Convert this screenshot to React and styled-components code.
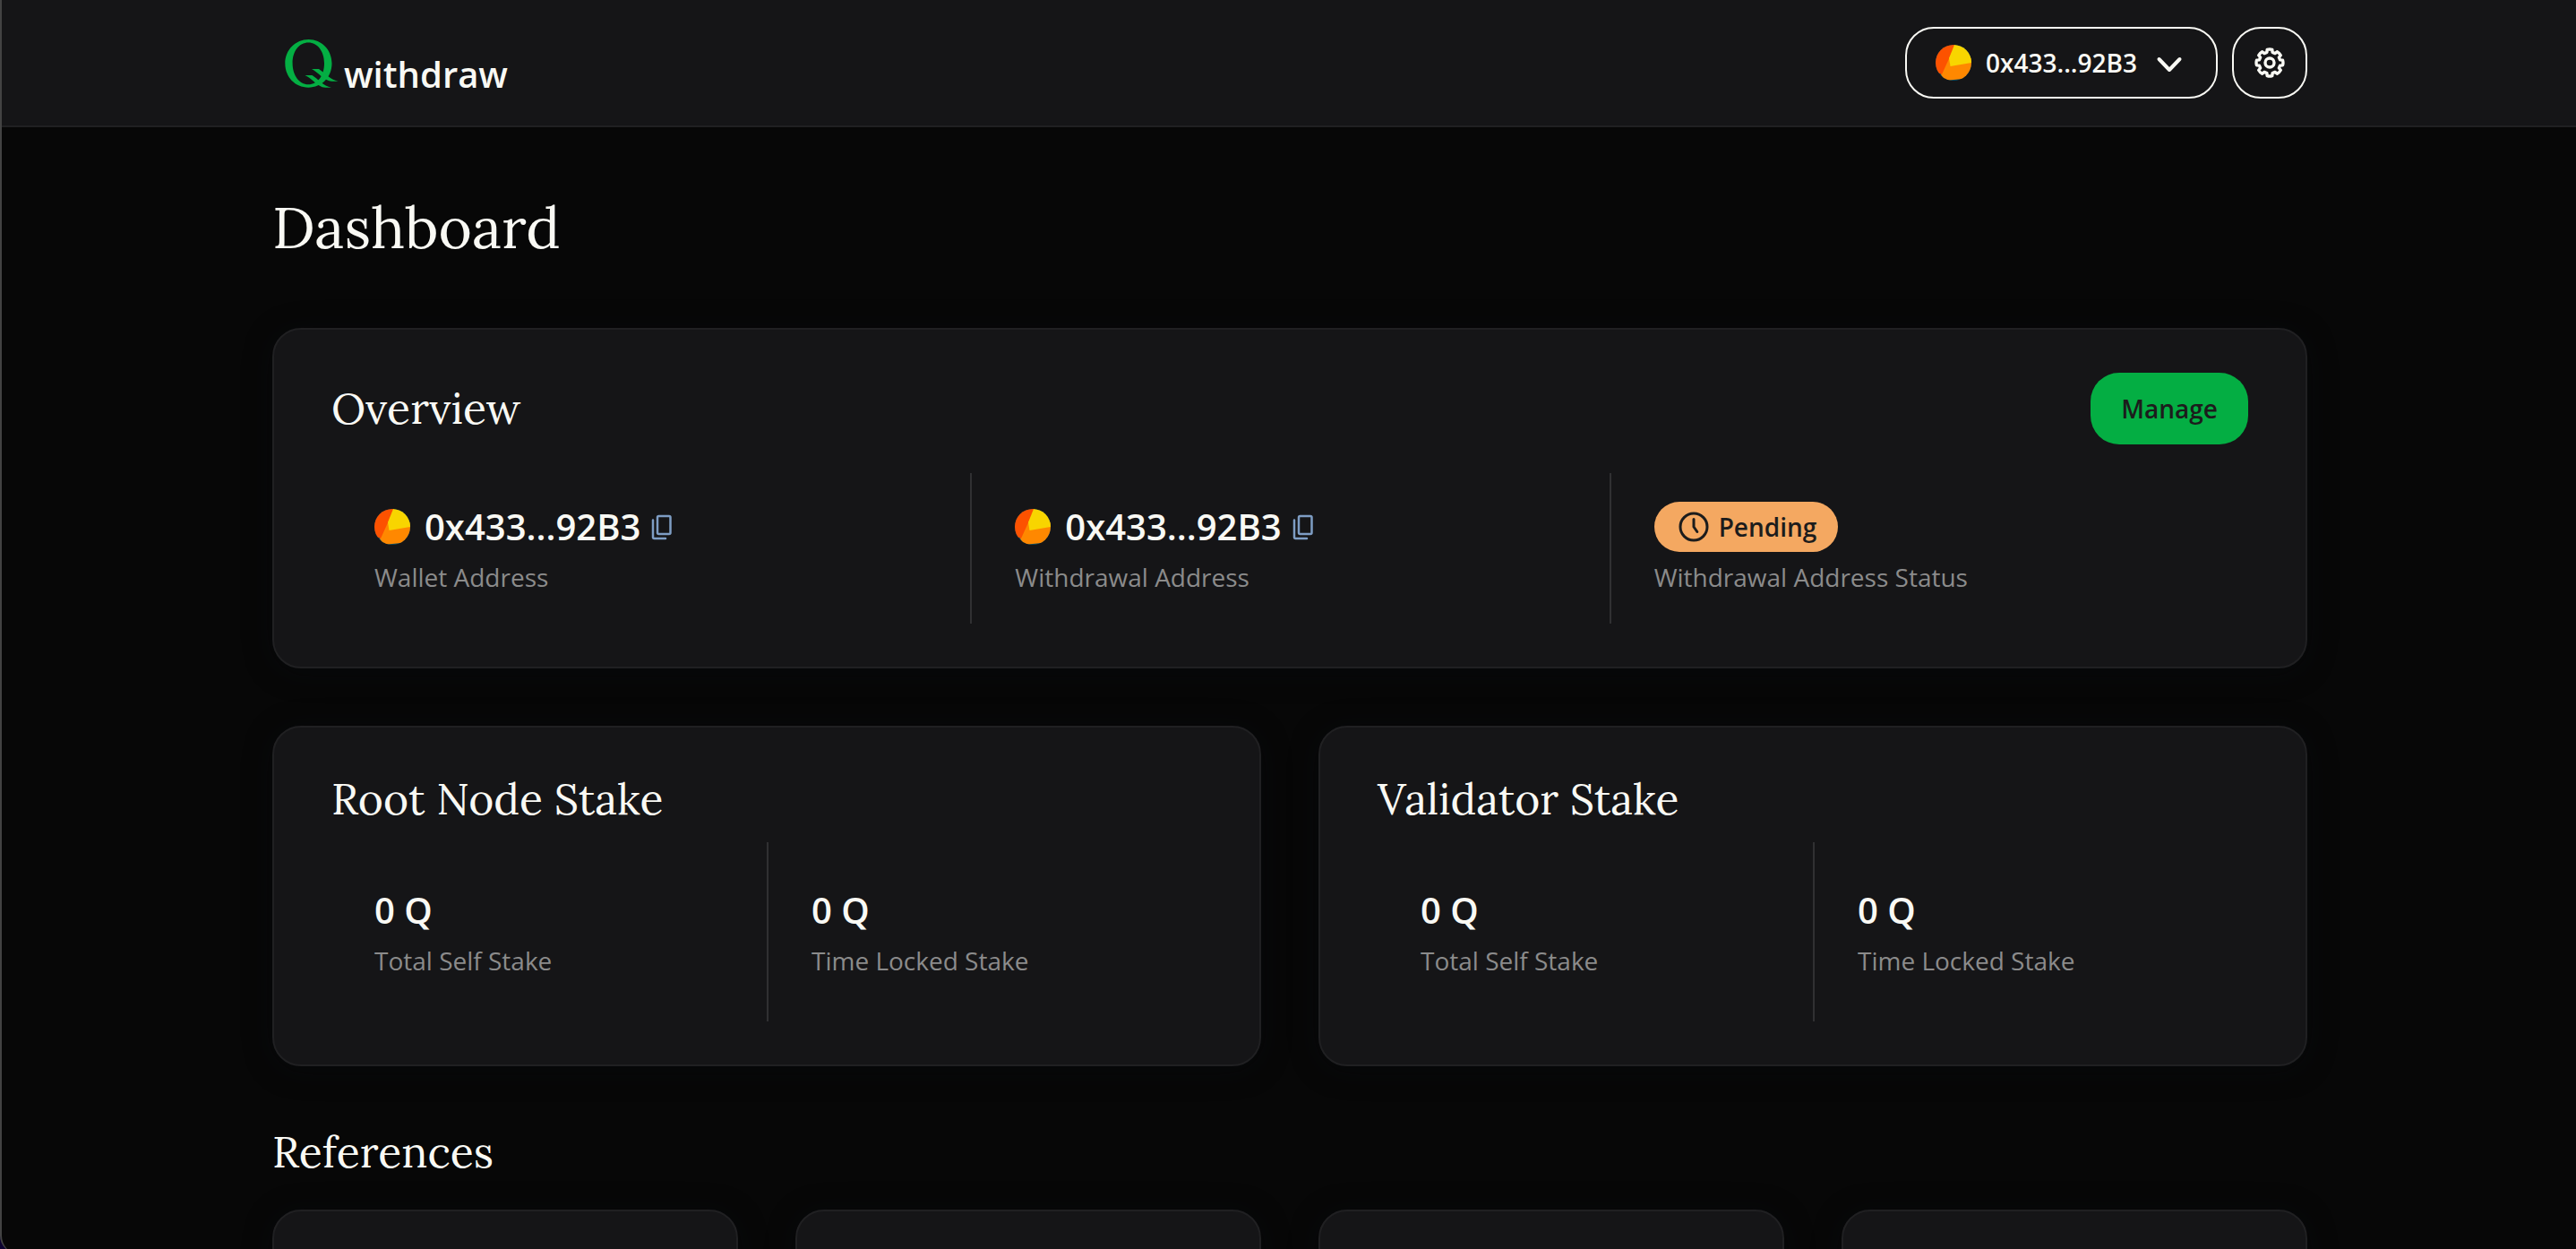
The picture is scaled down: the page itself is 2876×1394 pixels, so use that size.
import styled, { createGlobalStyle } from 'styled-components'

const GlobalStyle = createGlobalStyle`
    :root {
        --page: #070707;
        --surface: #151517;
        --line: #202022;
        --divider: #303032;
        --text: #f9f9f4;
        --muted: #8b8b8b;
        --dark-text: #1c1c1c;
        --green: #04ae43;
        --orange: #f4a861;
        --blue: #7e9dc4;
        --sans: "Open Sans", "Noto Sans", sans-serif;
        --serif: "Lora", "Liberation Serif", serif;
    }
    * {
        box-sizing: border-box;
        margin: 0;
        padding: 0;
    }
    body {
        height: 100vh;
        overflow: hidden;
        background: #0c0330;
        color: var(--text);
        font-family: var(--sans);
        font-size: 28px;
        line-height: 40px;
    }
    button {
        font: inherit;
        color: inherit;
        background: none;
        border: none;
        cursor: pointer;
    }
    svg {
        display: block;
        flex: none;
    }
`

const Frame = styled.div`
    height: calc(100vh + 5px);
    overflow: hidden;
    border-left: 2px solid #434343;
    border-bottom-left-radius: 20px;
    background: var(--page);
`
const Container = styled.div`
    max-width: 2272px;
    margin: 0 auto;
`
const Header = styled.header`
    padding: 30px 0 30px 2px;
    border-bottom: 2px solid var(--line);
    background: var(--surface);
`
const HeaderRow = styled(Container)`
    display: flex;
    justify-content: space-between;
    align-items: flex-start;
`
const Logo = styled.a`
    display: flex;
    align-items: baseline;
    gap: 6px;
    padding: 14px 14px 0;
    color: var(--text);
    font-size: 40px;
    font-weight: 600;
    text-decoration: none;
`
const Actions = styled.div`
    display: flex;
    gap: 16px;
`
const OutlineButton = styled.button`
    display: flex;
    align-items: center;
    justify-content: center;
    gap: 16px;
    height: 80px;
    min-width: 84px;
    padding: ${({ $wide }) => $wide ? '0 32px' : '0'};
    border: 2px solid var(--text);
    border-radius: 32px;
    font-weight: 600;
`
const Main = styled.main`
    padding: 64px 0 64px 2px;
`
const Sections = styled(Container)`
    display: flex;
    flex-direction: column;
    gap: 64px;
`
const PageTitle = styled.h1`
    font-family: var(--serif);
    font-size: 64px;
    font-weight: 400;
    line-height: 96px;
`
const Title = styled.h2`
    font-family: var(--serif);
    font-size: 48px;
    font-weight: 400;
    line-height: 64px;
`
const Card = styled.section`
    padding: 48px 64px;
    border: 2px solid var(--line);
    border-radius: 32px;
    background: var(--surface);
    box-shadow: 0 4px 32px rgba(8, 12, 18, .4);
`
const CardHead = styled.div`
    display: flex;
    justify-content: space-between;
    align-items: center;
    margin-bottom: ${({ $gap }) => $gap};
`
const ManageButton = styled.button`
    height: 80px;
    padding: 0 34px;
    border-radius: 32px;
    background: var(--green);
    color: var(--dark-text);
    font-weight: 600;
`
const Cells = styled.dl`
    display: grid;
    grid-template-columns: repeat(${({ $columns }) => $columns}, 1fr);
`
const Cell = styled.div`
    display: flex;
    flex-direction: column-reverse;
    gap: 8px;
    padding: ${({ $tall }) => $tall ? '48px' : '32px 48px'};
    & + & {
        border-left: 2px solid var(--divider);
    }
`
const Label = styled.dt`
    color: var(--muted);
`
const Value = styled.dd`
    display: flex;
    align-items: center;
    height: 56px;
    font-size: 40px;
    font-weight: 600;
`
const Address = styled.span`
    margin-left: 16px;
`
const CopyButton = styled.button`
    margin-left: 8px;
    color: var(--blue);
`
const Badge = styled.span`
    display: flex;
    align-items: center;
    gap: 8px;
    height: 56px;
    padding: 0 24px;
    border-radius: 28px;
    background: var(--orange);
    color: var(--dark-text);
    font-size: 28px;
    font-weight: 600;
`
const Columns = styled.div`
    display: grid;
    grid-template-columns: repeat(${({ $count }) => $count}, 1fr);
    gap: 64px;
`
const References = styled.section`
    display: flex;
    flex-direction: column;
    gap: 32px;
`
const ReferenceCard = styled(Card).attrs({ as: 'article' })`
    min-height: 320px;
`

const QMark = () => (
    <svg width="60" height="54" viewBox="0 0 60 54" fill="#04ae43" aria-hidden="true">
        <path fillRule="evenodd" d="M26.500 0C41 0 52.500 11.500 52.500 26.800S41 53.700 26.300 53.700 .3 42 .3 26.800 12 0 26.500 0ZM26.300 3.500C16 3.500 8.600 13 8.600 26.500S16 50.300 26.300 50.300 44 40.500 44 26.800 36.500 3.500 26.300 3.500Z" />
        <path d="M30 33H38C44 37 51 45 59.500 46.700H53Q50 47 46.500 45C40 41.500 36 36 30 33Z" />
        <path d="M22.500 40H30.500C37 44 43 52 52 53.700H46Q42 54 38.500 51.500C32.500 48 29 43 22.500 40Z" />
    </svg>
)

const Avatar = () => (
    <svg width="40" height="40" viewBox="0 0 40 40" aria-hidden="true">
        <clipPath id="avatar"><circle cx="20" cy="20" r="20" /></clipPath>
        <g clipPath="url(#avatar)">
            <path fill="#0c4a5c" d="M0 0H40V40H0Z" />
            <path fill="#ff8800" d="M15 8 40 14V37L10 40 6 33Z" />
            <path fill="#fc5200" d="M0 0H22L7 33 0 30Z" />
            <path fill="#f8d500" d="M21 0H40V20L16.500 24 15 15Z" />
        </g>
    </svg>
)

const Chevron = () => (
    <svg width="40" height="40" viewBox="0 0 40 40" fill="none" stroke="currentColor" strokeWidth="4" strokeLinecap="round" strokeLinejoin="round" aria-hidden="true">
        <path d="m8.500 16 11.500 12 11.500-12" />
    </svg>
)

const point = (radius, degrees) => {
    const angle = degrees * Math.PI / 180
    return `${(20 + radius * Math.sin(angle)).toFixed(2)} ${(20 - radius * Math.cos(angle)).toFixed(2)}`
}

// eight teeth, one every 45 degrees
const teeth = Array.from({ length: 8 }, (_, i) => i * 45)
const gearPath = `M${teeth.map(a => (
    `${point(12, a - 15)}L${point(14.8, a - 11)}Q${point(15.4, a)} ${point(14.8, a + 11)}L${point(12, a + 15)}`
)).join('L')}Z`

const Gear = () => (
    <svg width="40" height="40" viewBox="0 0 40 40" fill="none" stroke="currentColor" strokeWidth="3.4" strokeLinejoin="round" aria-hidden="true">
        <path d={gearPath} />
        <circle cx="20" cy="20" r="5" />
    </svg>
)

const CopyIcon = () => (
    <svg width="32" height="32" viewBox="0 0 32 32" fill="none" stroke="currentColor" strokeWidth="2.500" strokeLinecap="round" strokeLinejoin="round" aria-hidden="true">
        <rect x="11" y="4" width="14.500" height="20" rx="1.500" />
        <path d="M6 8.500V27.500a1.500 1.500 0 0 0 1.500 1.500H20" />
    </svg>
)

const Clock = () => (
    <svg width="40" height="40" viewBox="0 0 40 40" fill="none" stroke="currentColor" strokeWidth="3" strokeLinecap="round" strokeLinejoin="round" aria-hidden="true">
        <circle cx="20" cy="20" r="15" />
        <path d="M20 11.500V20l3.800 5.500" />
    </svg>
)

const WalletAddress = ({ label }) => (
    <Cell>
        <Label>{label}</Label>
        <Value>
            <Avatar />
            <Address>0x433...92B3</Address>
            <CopyButton type="button" aria-label={`Copy ${label}`}><CopyIcon /></CopyButton>
        </Value>
    </Cell>
)

const StakeCard = ({ title }) => (
    <Card>
        <CardHead $gap="16px">
            <Title>{title}</Title>
        </CardHead>
        <Cells $columns={2}>
            <Cell $tall>
                <Label>Total Self Stake</Label>
                <Value>0 Q</Value>
            </Cell>
            <Cell $tall>
                <Label>Time Locked Stake</Label>
                <Value>0 Q</Value>
            </Cell>
        </Cells>
    </Card>
)

const App = () => {
    return(
        <>
            <GlobalStyle />
            <Frame>
                <Header>
                    <HeaderRow>
                        <Logo href="#">
                            <QMark />
                            withdraw
                        </Logo>
                        <Actions>
                            <OutlineButton type="button" $wide>
                                <Avatar />
                                0x433...92B3
                                <Chevron />
                            </OutlineButton>
                            <OutlineButton type="button" aria-label="Settings">
                                <Gear />
                            </OutlineButton>
                        </Actions>
                    </HeaderRow>
                </Header>
                <Main>
                    <Sections>
                        <PageTitle>Dashboard</PageTitle>
                        <Card>
                            <CardHead $gap="32px">
                                <Title>Overview</Title>
                                <ManageButton type="button">Manage</ManageButton>
                            </CardHead>
                            <Cells $columns={3}>
                                <WalletAddress label="Wallet Address" />
                                <WalletAddress label="Withdrawal Address" />
                                <Cell>
                                    <Label>Withdrawal Address Status</Label>
                                    <Value>
                                        <Badge>
                                            <Clock />
                                            Pending
                                        </Badge>
                                    </Value>
                                </Cell>
                            </Cells>
                        </Card>
                        <Columns $count={2}>
                            <StakeCard title="Root Node Stake" />
                            <StakeCard title="Validator Stake" />
                        </Columns>
                        <References>
                            <Title>References</Title>
                            <Columns $count={4}>
                                <ReferenceCard />
                                <ReferenceCard />
                                <ReferenceCard />
                                <ReferenceCard />
                            </Columns>
                        </References>
                    </Sections>
                </Main>
            </Frame>
        </>
    )
}

export default App
